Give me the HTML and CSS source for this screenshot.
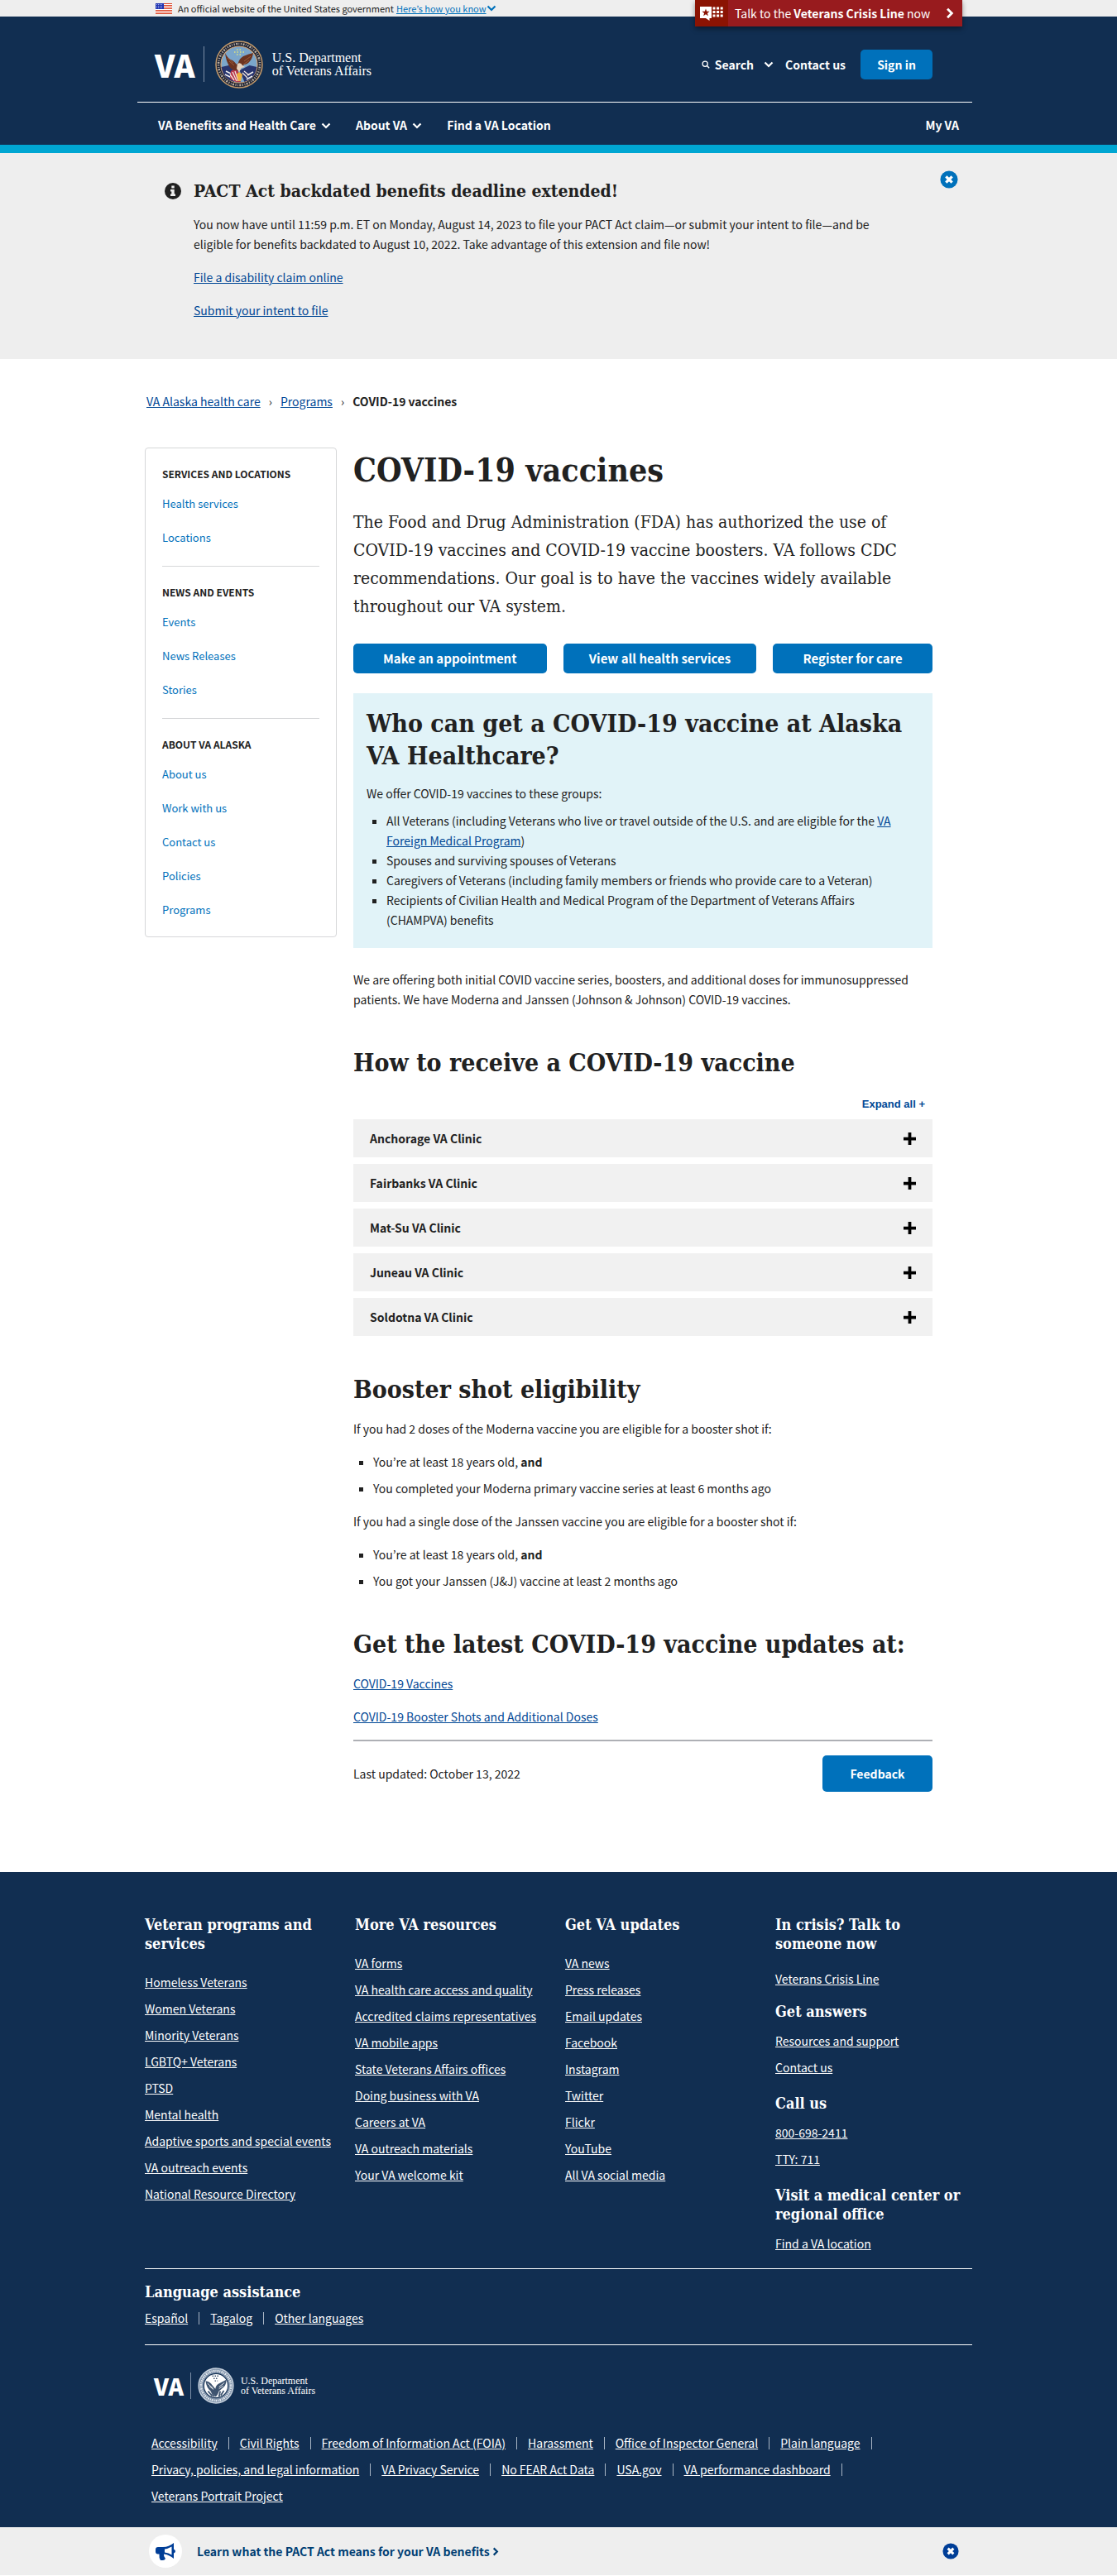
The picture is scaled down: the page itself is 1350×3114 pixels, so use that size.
FILE: index.html
```html
<!DOCTYPE html>
<html lang="en">
<head>
<meta charset="utf-8">
<meta name="viewport" content="width=device-width, initial-scale=1">
<title>COVID-19 vaccines | VA Alaska health care</title>
<link rel="stylesheet" href="styles.css">
</head>
<body>
<svg class="sprite" aria-hidden="true">
  <symbol id="chevron-down" viewBox="0 0 12 8"><path d="M1.5 1.5 6 6l4.500-4.500" fill="none" stroke="currentColor" stroke-width="2.200"/></symbol>
  <symbol id="chevron-right" viewBox="0 0 8 12"><path d="M1.500 1.500 6 6l-4.500 4.500" fill="none" stroke="currentColor" stroke-width="2.400"/></symbol>
  <symbol id="close" viewBox="0 0 24 24"><circle cx="12" cy="12" r="11.500" fill="currentColor"/><path d="M8 8l8 8M16 8l-8 8" stroke="#fff" stroke-width="3.600"/></symbol>
  <symbol id="plus" viewBox="0 0 16 16"><path d="M8 0v16M0 8h16" stroke="currentColor" stroke-width="4"/></symbol>
</svg>

<div class="gov-banner">
  <div class="wrap gov-inner">
    <svg class="flag" viewBox="0 0 20 13" aria-hidden="true">
      <rect width="20" height="13" fill="#fff"/>
      <path d="M0 .5h20M0 2.500h20M0 4.500h20M0 6.500h20M0 8.500h20M0 10.500h20M0 12.500h20" stroke="#db3e1f"/>
      <rect width="10" height="7" fill="#1e33b1"/>
      <path d="M1 1.500h8M1 3.500h8M1 5.500h8" stroke="#a5b0e8" stroke-dasharray="1 1"/>
    </svg>
    <span>An official website of the United States government</span>
    <button class="gov-how" type="button"><span>Here’s how you know</span><svg class="chev" aria-hidden="true"><use href="#chevron-down"/></svg></button>
  </div>
</div>

<header class="header">
  <div class="wrap header-wrap">
    <button class="crisis" type="button">
      <span class="crisis-icon">
        <svg viewBox="0 0 30 18" aria-hidden="true">
          <path d="M1 1h14v14h-2.500v3L8 15H1z" fill="#fff"/>
          <path d="M8 3.500l1.200 3.300h3.400L9.900 8.900l1 3.400L8 10.200l-2.900 2.100 1-3.400L3.400 6.800h3.400z" fill="#8b1303"/>
          <path d="M16.500 3h13M16.500 7.500h13M16.500 12h13" stroke="#fff" stroke-width="3" stroke-dasharray="3 1.600"/>
        </svg>
      </span>
      <span class="crisis-text">Talk to the <b>Veterans Crisis Line</b> now</span>
      <svg class="crisis-arrow" aria-hidden="true"><use href="#chevron-right"/></svg>
    </button>
    <div class="header-top">
      <a class="logo" href="#">
        <span class="logo-va">VA</span>
        <svg class="logo-seal" viewBox="0 0 60 60" aria-hidden="true">
          <circle cx="30" cy="30" r="28" fill="#1d2233" stroke="#c39a6b" stroke-width="1.500"/>
          <circle cx="30" cy="30" r="25" fill="none" stroke="#b9b0a4" stroke-width="2.600" stroke-dasharray="1.200 1.500 2 1.300 .8 1.700"/>
          <circle cx="30" cy="30" r="22" fill="#7ba6cb" stroke="#d9a878" stroke-width="1.200"/>
          <path d="M8.500 33q2 14 15 18l6-14-12-6z" fill="#27346e"/>
          <path d="M51.500 33q-2 14-15 18l-6-14 12-6z" fill="#27346e"/>
          <path d="M14 38l8 4M13 42l10 5M40 43l7-4M39 48l7-4" stroke="#eee" stroke-width="1.500"/>
          <path d="M20 38q5-4 9 0l3 13q-8 1-13-4z" fill="#b6384b"/>
          <path d="M22 39l5 11M25 38l4 12M19 42l5 7M34 40l6 6M36 38l6 5" stroke="#f4e6e0" stroke-width="1.300"/>
          <path d="M13 16q4 8 9 9 3 2 5 5l2-2q1-5 6-8 7-3 12-4-1 7-4 10-3 4-7 4l-4 5q-3 3-6 2-5 0-8-5-4-7-5-16z" fill="#6b3320"/>
          <path d="M16 22l7 6M18 26l6 5M44 20l-8 6M42 25l-7 5" stroke="#9b5b37"/>
          <path d="M28 29q4-2 6 2l3 2-4 1-3 5-3-4z" fill="#e6d2bd"/>
          <path d="M27 42l3-3 4 3-2 8h-3z" fill="#efb13f"/>
          <path d="M27 12h6M24 15h12M27 18h5" stroke="#dfe27d" stroke-width="1.400" stroke-dasharray="1.500 2"/>
        </svg>
        <span class="logo-text">U.S. Department<br>of Veterans Affairs</span>
      </a>
      <div class="header-tools">
        <button class="tool" type="button">
          <svg class="search-icon" viewBox="0 0 12 12" aria-hidden="true"><circle cx="5" cy="5" r="3.700" fill="none" stroke="#fff" stroke-width="1.500"/><path d="M7.500 7.500 11 11" stroke="#fff" stroke-width="1.700"/></svg>
          <span>Search</span>
          <svg class="chev search-chev" aria-hidden="true"><use href="#chevron-down"/></svg>
        </button>
        <a class="tool" href="#">Contact us</a>
        <button class="btn sign-in" type="button">Sign in</button>
      </div>
    </div>
    <nav class="main-nav" aria-label="Main">
      <button class="nav-item" type="button">VA Benefits and Health Care <svg class="chev" aria-hidden="true"><use href="#chevron-down"/></svg></button>
      <button class="nav-item" type="button">About VA <svg class="chev" aria-hidden="true"><use href="#chevron-down"/></svg></button>
      <a class="nav-item" href="#">Find a VA Location</a>
      <a class="nav-item nav-last" href="#">My VA</a>
    </nav>
  </div>
</header>

<section class="alert">
  <div class="wrap alert-inner">
    <svg class="info" viewBox="0 0 20 20" aria-hidden="true"><circle cx="10" cy="10" r="10" fill="#212121"/><path d="M8.300 3.500h3.400v3H8.300zM7 8h4.700v5.500H13V16H7v-2.500h1.300v-3H7z" fill="#eee"/></svg>
    <div class="alert-body">
      <h2>PACT Act backdated benefits deadline extended!</h2>
      <p>You now have until 11:59 p.m. ET on Monday, August 14, 2023 to file your PACT Act claim—or submit your intent to file—and be eligible for benefits backdated to August 10, 2022. Take advantage of this extension and file now!</p>
      <p><a href="#">File a disability claim online</a></p>
      <p><a href="#">Submit your intent to file</a></p>
    </div>
    <button class="close" type="button" aria-label="Close this announcement"><svg aria-hidden="true"><use href="#close"/></svg></button>
  </div>
</section>

<div class="wrap">
  <nav class="crumbs" aria-label="Breadcrumb">
    <a href="#">VA Alaska health care</a><span>›</span><a href="#">Programs</a><span>›</span><b>COVID-19 vaccines</b>
  </nav>
  <div class="columns">
    <nav class="sidebar" aria-label="VA Alaska health care">
      <section>
        <h2>SERVICES AND LOCATIONS</h2>
        <a href="#">Health services</a><a href="#">Locations</a>
      </section>
      <section>
        <h2>NEWS AND EVENTS</h2>
        <a href="#">Events</a><a href="#">News Releases</a><a href="#">Stories</a>
      </section>
      <section>
        <h2>ABOUT VA ALASKA</h2>
        <a href="#">About us</a><a href="#">Work with us</a><a href="#">Contact us</a><a href="#">Policies</a><a href="#">Programs</a>
      </section>
    </nav>
    <main class="content">
      <h1>COVID-19 vaccines</h1>
      <p class="intro">The Food and Drug Administration (FDA) has authorized the use of COVID-19 vaccines and COVID-19 vaccine boosters. VA follows CDC recommendations. Our goal is to have the vaccines widely available throughout our VA system.</p>
      <div class="actions">
        <a class="btn" href="#">Make an appointment</a>
        <a class="btn" href="#">View all health services</a>
        <a class="btn" href="#">Register for care</a>
      </div>
      <section class="callout">
        <h2>Who can get a COVID-19 vaccine at Alaska VA Healthcare?</h2>
        <p>We offer COVID-19 vaccines to these groups:</p>
        <ul>
          <li>All Veterans (including Veterans who live or travel outside of the U.S. and are eligible for the <a href="#">VA Foreign Medical Program</a>)</li>
          <li>Spouses and surviving spouses of Veterans</li>
          <li>Caregivers of Veterans (including family members or friends who provide care to a Veteran)</li>
          <li>Recipients of Civilian Health and Medical Program of the Department of Veterans Affairs (CHAMPVA) benefits</li>
        </ul>
      </section>
      <p class="offer">We are offering both initial COVID vaccine series, boosters, and additional doses for immunosuppressed patients. We have Moderna and Janssen (Johnson &amp; Johnson) COVID-19 vaccines.</p>

      <h2>How to receive a COVID-19 vaccine</h2>
      <button class="expand" type="button">Expand all +</button>
      <div class="accordion">
        <button type="button">Anchorage VA Clinic<svg aria-hidden="true"><use href="#plus"/></svg></button>
        <button type="button">Fairbanks VA Clinic<svg aria-hidden="true"><use href="#plus"/></svg></button>
        <button type="button">Mat-Su VA Clinic<svg aria-hidden="true"><use href="#plus"/></svg></button>
        <button type="button">Juneau VA Clinic<svg aria-hidden="true"><use href="#plus"/></svg></button>
        <button type="button">Soldotna VA Clinic<svg aria-hidden="true"><use href="#plus"/></svg></button>
      </div>

      <h2>Booster shot eligibility</h2>
      <p>If you had 2 doses of the Moderna vaccine you are eligible for a booster shot if:</p>
      <ul class="spaced">
        <li>You’re at least 18 years old, <b>and</b></li>
        <li>You completed your Moderna primary vaccine series at least 6 months ago</li>
      </ul>
      <p>If you had a single dose of the Janssen vaccine you are eligible for a booster shot if:</p>
      <ul class="spaced">
        <li>You’re at least 18 years old, <b>and</b></li>
        <li>You got your Janssen (J&amp;J) vaccine at least 2 months ago</li>
      </ul>

      <h2>Get the latest COVID-19 vaccine updates at:</h2>
      <p><a href="#">COVID-19 Vaccines</a></p>
      <p><a href="#">COVID-19 Booster Shots and Additional Doses</a></p>
      <div class="page-end">
        <span>Last updated: October 13, 2022</span>
        <button class="btn feedback" type="button">Feedback</button>
      </div>
    </main>
  </div>
</div>

<footer class="footer">
  <div class="wrap">
    <div class="footer-cols">
      <section>
        <h2>Veteran programs and services</h2>
        <ul>
          <li><a href="#">Homeless Veterans</a></li>
          <li><a href="#">Women Veterans</a></li>
          <li><a href="#">Minority Veterans</a></li>
          <li><a href="#">LGBTQ+ Veterans</a></li>
          <li><a href="#">PTSD</a></li>
          <li><a href="#">Mental health</a></li>
          <li><a href="#">Adaptive sports and special events</a></li>
          <li><a href="#">VA outreach events</a></li>
          <li><a href="#">National Resource Directory</a></li>
        </ul>
      </section>
      <section>
        <h2>More VA resources</h2>
        <ul>
          <li><a href="#">VA forms</a></li>
          <li><a href="#">VA health care access and quality</a></li>
          <li><a href="#">Accredited claims representatives</a></li>
          <li><a href="#">VA mobile apps</a></li>
          <li><a href="#">State Veterans Affairs offices</a></li>
          <li><a href="#">Doing business with VA</a></li>
          <li><a href="#">Careers at VA</a></li>
          <li><a href="#">VA outreach materials</a></li>
          <li><a href="#">Your VA welcome kit</a></li>
        </ul>
      </section>
      <section>
        <h2>Get VA updates</h2>
        <ul>
          <li><a href="#">VA news</a></li>
          <li><a href="#">Press releases</a></li>
          <li><a href="#">Email updates</a></li>
          <li><a href="#">Facebook</a></li>
          <li><a href="#">Instagram</a></li>
          <li><a href="#">Twitter</a></li>
          <li><a href="#">Flickr</a></li>
          <li><a href="#">YouTube</a></li>
          <li><a href="#">All VA social media</a></li>
        </ul>
      </section>
      <section class="footer-contact">
        <h2>In crisis? Talk to someone now</h2>
        <ul>
          <li><a href="#">Veterans Crisis Line</a></li>
        </ul>
        <h2>Get answers</h2>
        <ul>
          <li><a href="#">Resources and support</a></li>
          <li><a href="#">Contact us</a></li>
        </ul>
        <h2>Call us</h2>
        <ul>
          <li><a href="#">800-698-2411</a></li>
          <li><a href="#">TTY: 711</a></li>
        </ul>
        <h2>Visit a medical center or regional office</h2>
        <ul>
          <li><a href="#">Find a VA location</a></li>
        </ul>
      </section>
    </div>
    <section class="languages">
      <h2>Language assistance</h2>
      <ul class="inline-links">
        <li><a href="#">Español</a></li>
        <li><a href="#">Tagalog</a></li>
        <li><a href="#">Other languages</a></li>
      </ul>
    </section>
    <div class="footer-end">
      <a class="logo logo-small" href="#">
        <span class="logo-va">VA</span>
        <svg class="logo-seal" viewBox="0 0 60 60" aria-hidden="true">
          <circle cx="30" cy="30" r="28.500" fill="#8093aa" stroke="#c9d3de" stroke-width="2"/>
          <circle cx="30" cy="30" r="24.500" fill="none" stroke="#e8edf2" stroke-width="3.500" stroke-dasharray="1.500 1.600 2.200 1.400"/>
          <circle cx="30" cy="30" r="20" fill="#fff" stroke="#112e51" stroke-width="1.500"/>
          <path d="M13 22q7 1 10 6l6 7q1-6 5-8l13-7q0 8-4 12l-8 7q-3 9-6 9l-6-8q-9-6-10-18z" fill="#3d536f"/>
          <path d="M16 26l9 8M19 31l7 5M44 25l-9 7M42 30l-7 5" stroke="#fff" stroke-width="1.200"/>
          <path d="M17 39l7 8M22 38l5 10M37 39l-2 9M43 38l-5 8" stroke="#3d536f" stroke-width="2.500"/>
          <path d="M24 14h12M26 18h8M28 22h5" stroke="#3d536f" stroke-width="2" stroke-dasharray="2 2"/>
        </svg>
        <span class="logo-text">U.S. Department<br>of Veterans Affairs</span>
      </a>
      <ul class="inline-links legal">
        <li><a href="#">Accessibility</a></li>
        <li><a href="#">Civil Rights</a></li>
        <li><a href="#">Freedom of Information Act (FOIA)</a></li>
        <li><a href="#">Harassment</a></li>
        <li><a href="#">Office of Inspector General</a></li>
        <li><a href="#">Plain language</a></li>
        <li><a href="#">Privacy, policies, and legal information</a></li>
        <li><a href="#">VA Privacy Service</a></li>
        <li><a href="#">No FEAR Act Data</a></li>
        <li><a href="#">USA.gov</a></li>
        <li><a href="#">VA performance dashboard</a></li>
        <li><a href="#">Veterans Portrait Project</a></li>
      </ul>
    </div>
  </div>
</footer>

<aside class="promo">
  <div class="wrap promo-inner">
    <span class="promo-icon">
      <svg viewBox="0 0 24 22" aria-hidden="true"><path d="M22 1v7.500q2 1 2 2.500t-2 2.500V20q-6-5-12-5.500-.5 3 2 5.500-1 2-3 2H6q-2-3-1.500-7.500H3q-3 0-3-3V9q0-3 3-3h6q7 0 13-5zM19.500 5.500Q15 8 11 8.500v4q5 .5 8.500 3z" fill="#003e97" fill-rule="evenodd"/></svg>
    </span>
    <a class="promo-link" href="#">Learn what the PACT Act means for your VA benefits <svg aria-hidden="true"><use href="#chevron-right"/></svg></a>
    <button class="close" type="button" aria-label="Dismiss promo"><svg aria-hidden="true"><use href="#close"/></svg></button>
  </div>
</aside>
</body>
</html>
```

FILE: styles.css
```css
:root {
  --sans: "Noto Sans CJK JP", "Noto Sans", sans-serif;
  --slab: "DejaVu Serif Condensed", "DejaVu Serif", serif;
  --navy: #112e51;
  --blue: #0071bb;
  --link: #004795;
  --gray: #eee;
  --ink: #212121;
}

* { box-sizing: border-box; }

body {
  margin: 0;
  font: 14px/24px var(--sans);
  color: var(--ink);
  background: #fff;
}

h1, h2, p, ul { margin: 0; }
ul { padding: 0; }
h1, h2 { font-family: var(--slab); font-weight: 700; }
a { color: var(--link); }
button {
  padding: 0;
  border: 0;
  background: none;
  color: inherit;
  font: inherit;
  cursor: pointer;
}

.sprite { display: none; }
.wrap { max-width: 1000px; margin: 0 auto; }
.chev { width: 12px; height: 8px; }

.btn {
  display: block;
  border-radius: 5px;
  background: var(--blue);
  color: #fff;
  font-weight: 700;
  text-align: center;
  text-decoration: none;
}

/* Government banner */
.gov-banner { background: var(--gray); }
.gov-inner {
  display: flex;
  align-items: center;
  height: 20px;
  padding-left: 13px;
  font-size: 11px;
  line-height: 20px;
}
.flag { width: 20px; height: 13px; margin-right: 7px; }
.gov-how { display: flex; align-items: center; margin-left: 3px; color: var(--blue); }
.gov-how span { text-decoration: underline; }

/* Header */
.header { background: var(--navy); border-bottom: 10px solid #00a6d2; color: #fff; }
.header-wrap { position: relative; }
.crisis {
  position: absolute;
  top: -20px;
  right: 12px;
  display: flex;
  align-items: center;
  width: 323px;
  height: 32px;
  background: #981b1e;
  box-shadow: 0 3px 6px rgba(0, 0, 0, .4);
}
.crisis-icon { display: flex; align-items: center; width: 40px; height: 32px; padding-left: 5px; background: #8b1303; }
.crisis-icon svg { width: 30px; height: 18px; }
.crisis-text { margin-left: 8px; }
.crisis-arrow { width: 10px; height: 14px; margin-left: auto; margin-right: 10px; }

.header-top {
  display: flex;
  align-items: center;
  justify-content: space-between;
  height: 104px;
  margin-left: -9px;
  padding: 12px 48px 0 21px;
  border-bottom: 1px solid #fff;
}
.logo { display: flex; align-items: center; color: #fff; text-decoration: none; }
.logo-va {
  padding-right: 10px;
  border-right: 1px solid #7c8ea6;
  font-size: 38px;
  font-weight: 900;
  line-height: 43px;
}
.logo-seal { width: 60px; height: 60px; margin: 0 10px 0 12px; }
.logo-text { font: 16px/16px "Liberation Serif", serif; }
.header-tools { display: flex; align-items: center; font-weight: 700; }
.tool { display: flex; align-items: center; margin-right: 18px; color: #fff; text-decoration: none; }
.search-icon { width: 10px; height: 10px; margin-right: 6px; }
.search-chev { margin-left: 12px; }
.tool:first-child { margin-right: 14px; }
.sign-in { width: 87px; height: 36px; }

.main-nav { display: flex; height: 51px; align-items: center; padding: 2px 16px 0; }
.nav-item { margin-right: 30px; color: #fff; font-weight: 700; text-decoration: none; }
.nav-item .chev { margin-left: 3px; vertical-align: 1px; }
.nav-last { margin: 0 0 0 auto; }

/* Announcement */
.alert { background: var(--gray); }
.alert-inner { display: flex; padding: 33px 0 47px 24px; }
.info { width: 20px; height: 20px; margin: 3px 15px 0 0; }
.alert-body { flex: 1; }
.alert-body h2 { font-size: 21px; line-height: 25px; }
.alert-body p { max-width: 860px; margin-top: 16px; }
.close { color: var(--blue); }
.close svg { display: block; width: 22px; height: 22px; }
.alert .close { align-self: flex-start; margin: -12px 17px 0 0; }

/* Breadcrumb */
.crumbs { display: flex; padding: 39px 2px 44px; }
.crumbs span { margin: 0 10px; }

/* Columns */
.columns { display: grid; grid-template-columns: 232px minmax(0, 700px); gap: 20px; align-items: start; }
.sidebar { border: 1px solid #d6d7d9; border-radius: 4px; padding: 0 20px; }
.sidebar section { padding: 19px 0 22px; }
.sidebar section + section { border-top: 1px solid #d6d7d9; }
.sidebar section:last-child { padding-bottom: 20px; }
.sidebar h2 { font: 700 12px/24px var(--sans); }
.sidebar a {
  display: block;
  margin-top: 17px;
  color: var(--blue);
  font-size: 13px;
  text-decoration: none;
}
.sidebar h2 + a { margin-top: 12px; }

.content h1 { font-size: 39px; line-height: 54px; }
.intro { max-width: 670px; margin: 19px 0 28px; font: 21px/34px var(--slab); }
.content h2 { margin: 45px 0 15px; font-size: 30px; line-height: 40px; }
.actions { display: flex; gap: 20px; }
.actions .btn { flex: 1 1 234px; height: 36px; font-size: 15px; line-height: 36px; }
.actions .btn:last-child { flex-basis: 193px; }
.content .callout { margin: 24px 0 26px; padding: 17px 16px 22px; background: #e1f3f8; }
.callout h2 { margin: 0 0 14px; line-height: 39px; }
.callout ul { max-width: 664px; margin-top: 9px; }
.content ul { padding-left: 24px; list-style: square; }
.callout li:last-child { max-width: 620px; }
.content .spaced { margin: 16px 0; }
.spaced li + li { margin-top: 8px; }
.content p + p { margin-top: 16px; }

.expand {
  display: block;
  margin: 20px 9px 8px auto;
  color: var(--link);
  font: 700 13px/20px "Liberation Sans", sans-serif;
}
.accordion { display: grid; gap: 8px; }
.accordion button {
  display: flex;
  align-items: center;
  justify-content: space-between;
  height: 46px;
  padding: 0 20px;
  background: #f1f1f1;
  font-weight: 700;
}
.accordion svg { width: 15px; height: 15px; color: #000; }

.page-end {
  display: flex;
  align-items: center;
  justify-content: space-between;
  margin: 16px 0 97px;
  padding-top: 17px;
  border-top: 2px solid #aeb0b5;
}
.feedback { width: 133px; height: 44px; }

/* Footer */
.footer { background: var(--navy); color: #fff; }
.footer a { color: #fff; }
.footer h2 { font-size: 18px; line-height: 23px; }
.footer ul { list-style: none; }
.footer-cols {
  display: grid;
  grid-template-columns: repeat(4, minmax(0, 234px));
  gap: 20px;
  padding: 52px 0 18px;
}
.footer-cols ul { display: grid; gap: 8px; margin-top: 23px; }
.footer-contact ul { margin: 12px 0 20px; }
.footer-contact h2:first-child + ul { margin: 19px 0 16px; }
.footer-contact ul:last-child { margin-bottom: 0; }
.languages { padding: 16px 0 20px; border: 1px solid #fff; border-width: 1px 0; }
.inline-links { display: flex; flex-wrap: wrap; gap: 8px 0; }
.inline-links li { display: flex; align-items: center; }
.inline-links li:not(:last-child)::after { content: ""; width: 1px; height: 15px; margin: 0 13px; background: #a9b6c5; }
.languages ul { margin-top: 8px; }
.footer-end { padding: 27px 0 26px 8px; }
.legal { margin-top: 35px; }
.logo-small { padding-left: 3px; }
.logo-small .logo-va { padding-right: 8px; font-size: 28px; line-height: 32px; }
.logo-small .logo-seal { width: 44px; height: 44px; margin: 0 8px; }
.logo-small .logo-text { font-size: 12px; line-height: 12px; }

/* Promo bar */
.promo { background: var(--gray); }
.promo-inner { display: flex; align-items: center; height: 58px; padding: 0 16px 0 5px; }
.promo-icon {
  display: grid;
  place-items: center;
  width: 40px;
  height: 40px;
  margin-right: 18px;
  border-radius: 50%;
  background: #fff;
}
.promo-icon svg { width: 24px; height: 22px; }
.promo-link { font-weight: 700; color: #003e73; text-decoration: none; }
.promo-link svg { width: 8px; height: 11px; }
.promo .close { margin-left: auto; color: #003e97; }
.promo .close svg { width: 20px; height: 20px; }
```
